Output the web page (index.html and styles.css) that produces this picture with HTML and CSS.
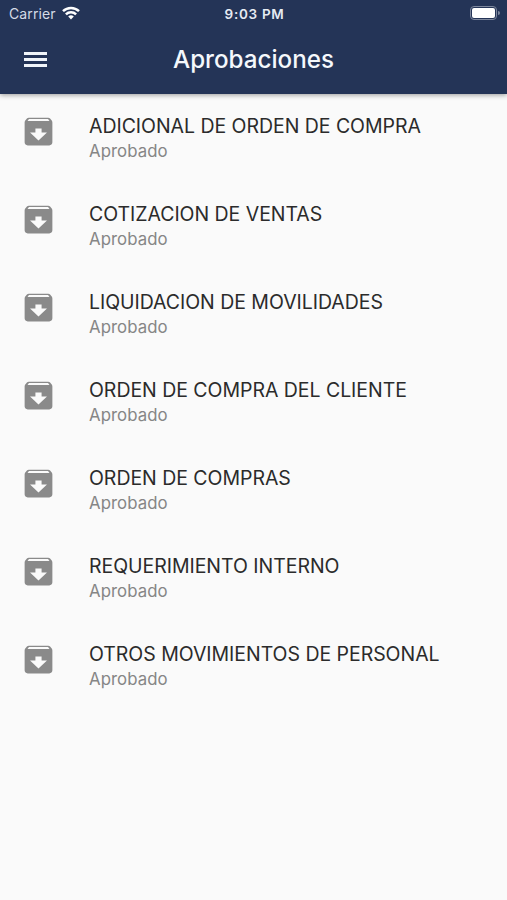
FILE: index.html
```html
<!DOCTYPE html>
<html lang="es">
<head>
    <meta charset="UTF-8">
    <meta name="viewport" content="width=device-width, initial-scale=1.0">
    <title>Aprobaciones</title>
    <link rel="stylesheet" href="styles.css">
</head>
<body>

<!-- Icon used by every row of the list -->
<svg width="0" height="0" class="defs">
    <symbol id="archive" viewBox="0 0 24 24">
        <path d="M20.6 4.9l-1.1-1.3C19.2 3.2 18.8 3 18.3 3H5.7c-.5 0-.9.2-1.2.6L3.4 4.9C3.1 5.2 3 5.7 3 6.2V19c0 1.1.9 2 2 2h14c1.1 0 2-.9 2-2V6.2c0-.5-.1-1-.4-1.3zM12 17.8L6.5 12.6H10V10h4v2.6h3.5L12 17.8zM4.9 5.2l.9-1.3h12.4l.9 1.3H4.9z"/>
    </symbol>
</svg>

<header class="header">
    <div class="status-bar">
        <div class="carrier">
            <span>Carrier</span>
            <svg class="wifi" viewBox="0 0 18 14">
                <path d="M1 5.2a11.5 11.5 0 0 1 16 0M3.9 8.3a7.3 7.3 0 0 1 10.2 0"/>
                <path class="dot" d="M9 13.5L6.2 10.6a4 4 0 0 1 5.6 0z"/>
            </svg>
        </div>
        <span class="time">9:03 PM</span>
        <div class="battery">
            <div class="battery-body"></div>
            <div class="battery-tip"></div>
        </div>
    </div>
    <div class="toolbar">
        <div class="menu">
            <span></span>
            <span></span>
            <span></span>
        </div>
        <h1 class="title">Aprobaciones</h1>
    </div>
</header>

<ul class="list">
    <li class="item">
        <svg class="icon"><use href="#archive"/></svg>
        <div class="text">
            <span class="name">ADICIONAL DE ORDEN DE COMPRA</span>
            <span class="state">Aprobado</span>
        </div>
    </li>
    <li class="item">
        <svg class="icon"><use href="#archive"/></svg>
        <div class="text">
            <span class="name">COTIZACION DE VENTAS</span>
            <span class="state">Aprobado</span>
        </div>
    </li>
    <li class="item">
        <svg class="icon"><use href="#archive"/></svg>
        <div class="text">
            <span class="name">LIQUIDACION DE MOVILIDADES</span>
            <span class="state">Aprobado</span>
        </div>
    </li>
    <li class="item">
        <svg class="icon"><use href="#archive"/></svg>
        <div class="text">
            <span class="name">ORDEN DE COMPRA DEL CLIENTE</span>
            <span class="state">Aprobado</span>
        </div>
    </li>
    <li class="item">
        <svg class="icon"><use href="#archive"/></svg>
        <div class="text">
            <span class="name">ORDEN DE COMPRAS</span>
            <span class="state">Aprobado</span>
        </div>
    </li>
    <li class="item">
        <svg class="icon"><use href="#archive"/></svg>
        <div class="text">
            <span class="name">REQUERIMIENTO INTERNO</span>
            <span class="state">Aprobado</span>
        </div>
    </li>
    <li class="item">
        <svg class="icon"><use href="#archive"/></svg>
        <div class="text">
            <span class="name">OTROS MOVIMIENTOS DE PERSONAL</span>
            <span class="state">Aprobado</span>
        </div>
    </li>
</ul>

</body>
</html>
```
FILE: styles.css
```css
body {
    margin: 0;
    min-height: 900px;
    background-color: #fafafa;
    font-family: Inter, Roboto, sans-serif;
}

.defs {
    display: none;
}

/* Header */
.header {
    height: 94px;
    background-color: #243457;
    color: #f5f8fc;
    box-shadow: 0 1px 5px rgba(0, 0, 0, 0.4);
}

.status-bar {
    display: grid;
    grid-template-columns: 1fr auto 1fr;
    align-items: center;
    height: 27px;
    padding: 0 7px 0 9px;
}

.carrier {
    display: flex;
    align-items: center;
    gap: 6px;
    font-size: 14px;
    letter-spacing: 0.1px;
    color: #d5dbe6;
}

.wifi {
    width: 18px;
    height: 14px;
    margin-top: -2px;
    fill: none;
    stroke: white;
    stroke-width: 2.5;
}

.wifi .dot {
    fill: white;
    stroke: none;
}

.time {
    font-size: 13.5px;
    font-weight: 600;
    letter-spacing: 0.7px;
    color: #e6ebf3;
}

.battery {
    display: flex;
    align-items: center;
    justify-content: flex-end;
    gap: 1px;
    margin-top: -1px;
}

.battery-body {
    box-sizing: border-box;
    width: 27px;
    height: 14px;
    border: 1px solid #7d879d;
    border-radius: 4px;
    padding: 1px;
    background-color: white;
    background-clip: content-box;
}

.battery-tip {
    width: 2px;
    height: 4px;
    border-radius: 0 2px 2px 0;
    background-color: #7d879d;
}

.toolbar {
    display: grid;
    grid-template-columns: 1fr auto 1fr;
    align-items: center;
    height: 65px;
    padding: 0 24px;
}

.menu {
    display: flex;
    flex-direction: column;
    gap: 3px;
    width: 23px;
}

.menu span {
    height: 3px;
    background-color: #f0f4f9;
}

.title {
    margin: 0;
    font-size: 24.2px;
    font-weight: 500;
}

/* List of approvals */
.list {
    margin: 0;
    padding: 0;
    list-style: none;
}

.item {
    display: flex;
    height: 88px;
}

.icon {
    width: 37px;
    height: 37px;
    margin: 19px 32px 0 20px;
    fill: #8a8a8a;
}

.text {
    display: flex;
    flex-direction: column;
    padding-top: 18px;
}

.name {
    font-size: 19.5px;
    line-height: 28px;
    letter-spacing: -0.04px;
    color: #2b2b2b;
    white-space: nowrap;
}

.state {
    font-size: 16.8px;
    line-height: 22px;
    letter-spacing: 0.06px;
    color: #868686;
}
```
